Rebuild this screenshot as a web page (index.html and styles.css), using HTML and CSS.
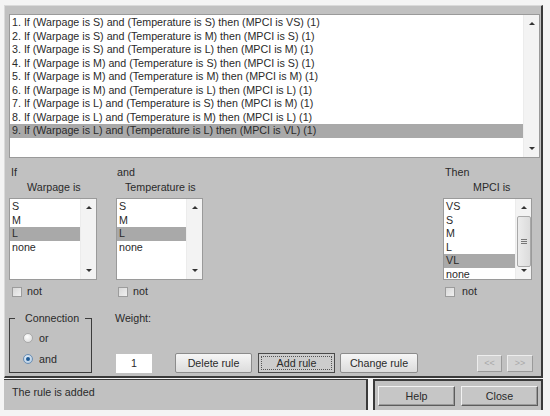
FILE: index.html
```html
<!DOCTYPE html>
<html>
<head>
<meta charset="utf-8">
<link rel="stylesheet" href="styles.css">
</head>
<body>
<div class="window">
  <div class="main">
    <div class="listbox rules">
      <ul class="items">
        <li>1. If (Warpage is S) and (Temperature is S) then (MPCI is VS) (1)</li>
        <li>2. If (Warpage is S) and (Temperature is M) then (MPCI is S) (1)</li>
        <li>3. If (Warpage is S) and (Temperature is L) then (MPCI is M) (1)</li>
        <li>4. If (Warpage is M) and (Temperature is S) then (MPCI is S) (1)</li>
        <li>5. If (Warpage is M) and (Temperature is M) then (MPCI is M) (1)</li>
        <li>6. If (Warpage is M) and (Temperature is L) then (MPCI is L) (1)</li>
        <li>7. If (Warpage is L) and (Temperature is S) then (MPCI is M) (1)</li>
        <li>8. If (Warpage is L) and (Temperature is M) then (MPCI is L) (1)</li>
        <li class="sel">9. If (Warpage is L) and (Temperature is L) then (MPCI is VL) (1)</li>
      </ul>
      <div class="vscroll"><span class="arrow up"></span><span class="arrow down"></span></div>
    </div>

    <div class="antecedents">
      <div class="group g-if">
        <div class="lbl">If</div>
        <div class="sub">Warpage is</div>
        <div class="listbox small">
          <ul class="items">
            <li>S</li>
            <li>M</li>
            <li class="sel">L</li>
            <li>none</li>
          </ul>
          <div class="vscroll"><span class="arrow up"></span><span class="arrow down"></span></div>
        </div>
        <div class="chk"><span class="box"></span>not</div>
      </div>

      <div class="group g-temp">
        <div class="lbl">and</div>
        <div class="sub">Temperature is</div>
        <div class="listbox small">
          <ul class="items">
            <li>S</li>
            <li>M</li>
            <li class="sel">L</li>
            <li>none</li>
          </ul>
          <div class="vscroll"><span class="arrow up"></span><span class="arrow down"></span></div>
        </div>
        <div class="chk"><span class="box"></span>not</div>
      </div>

      <div class="group g-then">
        <div class="lbl">Then</div>
        <div class="sub">MPCI is</div>
        <div class="listbox small">
          <ul class="items">
            <li>VS</li>
            <li>S</li>
            <li>M</li>
            <li>L</li>
            <li class="sel">VL</li>
            <li>none</li>
          </ul>
          <div class="vscroll has-thumb"><span class="arrow up"></span><span class="thumb"><span class="grip"></span></span><span class="arrow down"></span></div>
        </div>
        <div class="chk"><span class="box"></span>not</div>
      </div>
    </div>

    <div class="controls">
      <fieldset class="connection">
        <legend>Connection</legend>
        <div class="radio"><span class="dot"></span>or</div>
        <div class="radio on"><span class="dot"></span>and</div>
      </fieldset>
      <div class="weight">
        <div class="wlabel">Weight:</div>
        <div class="actions">
          <div class="field">1</div>
          <button class="btn del">Delete rule</button>
          <button class="btn add">Add rule</button>
          <button class="btn chg">Change rule</button>
          <div class="nav">
            <button class="navbtn">&lt;&lt;</button>
            <button class="navbtn">&gt;&gt;</button>
          </div>
        </div>
      </div>
    </div>
  </div>

  <div class="statusrow">
    <div class="status">The rule is added</div>
    <div class="helpbox">
      <button class="btn3d">Help</button>
      <button class="btn3d">Close</button>
    </div>
  </div>
</div>
</body>
</html>
```

FILE: styles.css
```css
* { box-sizing: border-box; }

body {
  margin: 0;
  background: #f4f4f4;
  font-family: "Liberation Sans", Arial, sans-serif;
  font-size: 10.7px;
  color: #2a2a2a;
}

.window {
  width: 550px;
  height: 416px;
  padding: 5px 0 0 4px;
}

.main {
  width: 539px;
  height: 373px;
  background: #c1c1c1;
  border-top: 1px solid #dadada;
  border-left: 1px solid #dadada;
  border-right: 2px solid #3a3a3a;
  border-bottom: 2px solid #3a3a3a;
}

/* list boxes */
.listbox {
  display: flex;
  background: #fff;
  border: 1px solid #9a9a9a;
  overflow: hidden;
}
.items {
  list-style: none;
  margin: 0;
  padding: 1px 0 0 0;
  flex: 1;
  overflow: hidden;
}
.items li {
  height: 13.5px;
  line-height: 13.5px;
  padding-left: 2px;
  white-space: nowrap;
}
.items li.sel { background: #a9a9a9; }

.vscroll {
  width: 16px;
  background: #f3f3f3;
  border-left: 1px solid #ececec;
  display: flex;
  flex-direction: column;
  justify-content: space-between;
  align-items: center;
  padding: 7px 0;
}
.arrow {
  width: 0;
  height: 0;
  border-left: 3px solid transparent;
  border-right: 3px solid transparent;
}
.arrow.up { border-bottom: 3px solid #333; }
.arrow.down { border-top: 3px solid #333; }

.has-thumb { justify-content: flex-start; }
.thumb {
  margin-top: 7px;
  width: 14px;
  height: 51px;
  background: linear-gradient(90deg, #ececec, #dcdcdc);
  border: 1px solid #a8a8a8;
  border-radius: 2px;
  display: flex;
  align-items: center;
  justify-content: center;
}
.grip {
  width: 6px;
  height: 5px;
  border-top: 1px solid #777;
  border-bottom: 1px solid #777;
}
.grip::after {
  content: "";
  display: block;
  margin-top: 1px;
  height: 1px;
  background: #777;
}
.has-thumb .arrow.down { margin-top: auto; }

.rules {
  margin: 8px 1px 0 4px;
  height: 144px;
}

/* antecedent / consequent groups */
.antecedents {
  display: flex;
  margin: 7px 9px 0 4px;
}
.group { display: flex; flex-direction: column; }
.g-if { width: 88px; }
.g-temp { width: 87px; margin-left: 19px; }
.g-then { width: 89px; margin-left: auto; }

.lbl, .sub { height: 15px; line-height: 15px; white-space: nowrap; }
.g-if .lbl { padding-left: 2px; }
.g-if .sub { padding-left: 18px; }
.g-temp .lbl { padding-left: 1px; }
.g-temp .sub { padding-left: 9px; }
.g-then .lbl { padding-left: 2px; }
.g-then .sub { padding-left: 30px; }

.listbox.small {
  margin-top: 3px;
  height: 82px;
}

.chk {
  margin-top: 6px;
  height: 11px;
  display: flex;
  align-items: center;
  line-height: 11px;
}
.chk .box {
  width: 10px;
  height: 10px;
  margin: 0 5px 0 2px;
  border: 1px solid #9c9c9c;
  background: linear-gradient(135deg, #d8d8d8, #f0f0f0);
}
.g-if .chk .box { margin-left: 3px; }
.g-then .chk .box { margin-right: 7px; }

/* bottom controls */
.controls {
  display: flex;
  margin: 15px 8px 0 4px;
}
.connection {
  margin: 0;
  width: 83px;
  height: 61px;
  padding: 0 0 0 5px;
  border: 1px solid #3c3c3c;
  min-width: 0;
}
.connection legend {
  padding: 0 6px 0 10px;
  line-height: 13px;
  height: 13px;
}
.radio {
  display: flex;
  align-items: center;
  height: 20px;
  margin-left: 8px;
}
.radio:first-of-type { margin-top: 3px; }
.radio + .radio { margin-top: 1px; }
.dot {
  width: 10px;
  height: 10px;
  border-radius: 50%;
  border: 1px solid #a8a8a8;
  background: radial-gradient(circle at 40% 35%, #ffffff, #d6d6d6);
  margin-right: 6px;
  display: flex;
  align-items: center;
  justify-content: center;
}
.radio.on .dot {
  border-color: #6b8fb4;
  background: radial-gradient(circle at 40% 35%, #e6f0fa, #a9c3dc);
}
.radio.on .dot::after {
  content: "";
  width: 4px;
  height: 4px;
  border-radius: 50%;
  background: #1e5a95;
}

.weight {
  margin-left: 23px;
  flex: 1;
  display: flex;
  flex-direction: column;
}
.wlabel { line-height: 13px; height: 13px; }
.actions {
  display: flex;
  align-items: center;
  height: 20px;
  margin-top: 28px;
}
.field {
  margin-left: 1px;
  width: 36px;
  height: 19px;
  background: #fff;
  text-align: center;
  line-height: 19px;
}

button {
  font-family: inherit;
  font-size: 10.7px;
  color: #2a2a2a;
  padding: 0;
  margin: 0;
}
.btn {
  height: 20px;
  border: 1px solid #8c8c8c;
  border-radius: 2px;
  background: linear-gradient(#f6f6f6, #dcdcdc);
}
.btn.del { margin-left: 23px; width: 77px; }
.btn.add {
  margin-left: 6px;
  width: 77px;
  background: #cdcdcd;
  border-color: #4a4a4a;
  border-radius: 0;
  outline: 1px dotted #555;
  outline-offset: -4px;
}
.btn.chg { margin-left: 5px; width: 78px; }

.nav { margin-left: auto; display: flex; gap: 5px; }
.navbtn {
  width: 25px;
  height: 17px;
  background: #d2d2d2;
  border: 1px solid;
  border-color: #ededed #9a9a9a #9a9a9a #ededed;
  color: #a9a9a9;
  font-size: 9px;
}
.navbtn + .navbtn { width: 26px; }

/* status row */
.statusrow {
  display: flex;
  margin-top: 1px;
  height: 31px;
}
.status {
  width: 364px;
  background: #c1c1c1;
  border-top: 1px solid #3a3a3a;
  border-right: 2px solid #3a3a3a;
  padding: 6px 0 0 8px;
  line-height: 13px;
}
.helpbox {
  margin-left: 5px;
  width: 170px;
  background: #c1c1c1;
  border-top: 2px solid #3a3a3a;
  border-left: 2px solid #3a3a3a;
  border-right: 2px solid #3a3a3a;
  display: flex;
  padding: 5px 0 0 3px;
}
.btn3d {
  width: 77px;
  height: 20px;
  background: #c6c6c6;
  border: 1px solid;
  border-color: #f2f2f2 #5c5c5c #5c5c5c #f2f2f2;
  box-shadow: inset -1px -1px 0 #9a9a9a;
}
.btn3d + .btn3d { margin-left: 6px; }
```
